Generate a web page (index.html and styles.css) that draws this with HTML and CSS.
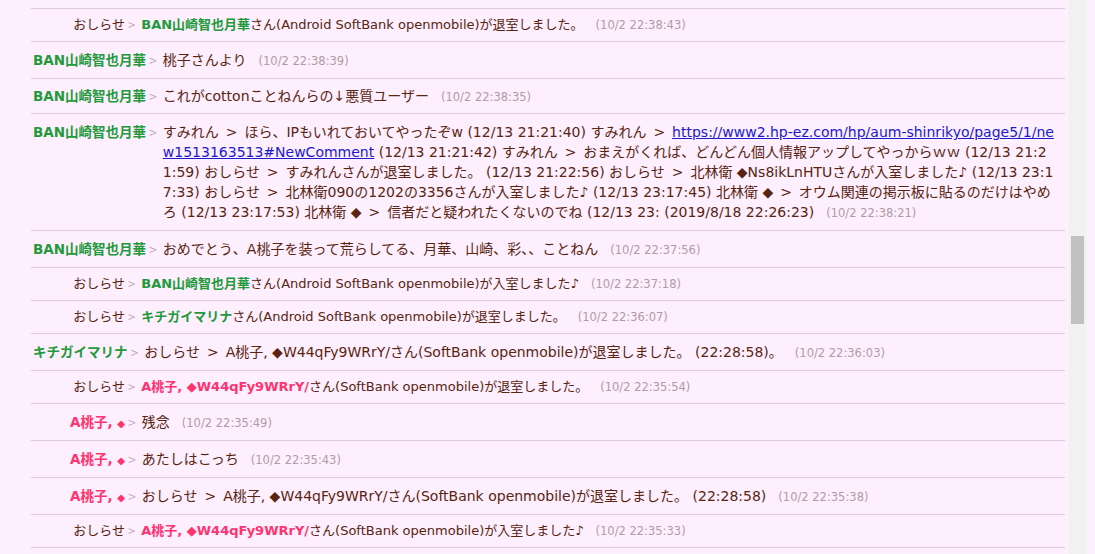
FILE: index.html
```html
<!DOCTYPE html>
<html lang="ja">

<head>
  <meta charset="UTF-8">
  <meta name="viewport" content="width=device-width, initial-scale=1.0">
  <title>ログ</title>
  <link rel="stylesheet" href="styles.css">
</head>

<body>
  <div class="page">
    <div class="log">
      <div class="rows">
        <div class="row sys">
          <span class="who">おしらせ</span><span class="sep">&gt;</span>
          <span class="msg"><b class="green">BAN山崎智也月華</b>さん(Android SoftBank openmobile)が退室しました。<span class="time">(10/2 22:38:43)</span></span>
        </div>
        <div class="row">
          <span class="who green">BAN山崎智也月華</span><span class="sep">&gt;</span>
          <span class="msg">桃子さんより<span class="time">(10/2 22:38:39)</span></span>
        </div>
        <div class="row short">
          <span class="who green">BAN山崎智也月華</span><span class="sep">&gt;</span>
          <span class="msg">これがcottonことねんらの↓悪質ユーザー<span class="time">(10/2 22:38:35)</span></span>
        </div>
        <div class="row">
          <span class="who green">BAN山崎智也月華</span><span class="sep">&gt;</span>
          <span class="msg">すみれん <i>&gt;</i> ほら、IPもいれておいてやったぞw (12/13 21:21:40) すみれん <i>&gt;</i> <a href="#">https://www2.hp-ez.com/hp/aum-shinrikyo/page5/1/new1513163513#NewComment</a> (12/13 21:21:42) すみれん <i>&gt;</i> おまえがくれば、どんどん個人情報アップしてやっからｗｗ (12/13 21:21:59) おしらせ <i>&gt;</i> すみれんさんが退室しました。 (12/13 21:22:56) おしらせ <i>&gt;</i> 北林衛 ◆Ns8ikLnHTUさんが入室しました♪ (12/13 23:17:33) おしらせ <i>&gt;</i> 北林衛090の1202の3356さんが入室しました♪ (12/13 23:17:45) 北林衛 ◆ <i>&gt;</i> オウム関連の掲示板に貼るのだけはやめろ (12/13 23:17:53) 北林衛 ◆ <i>&gt;</i> 信者だと疑われたくないのでね (12/13 23: (2019/8/18 22:26:23)<span class="time">(10/2 22:38:21)</span></span>
        </div>
        <div class="row">
          <span class="who green">BAN山崎智也月華</span><span class="sep">&gt;</span>
          <span class="msg">おめでとう、A桃子を装って荒らしてる、月華、山崎、彩、、ことねん<span class="time">(10/2 22:37:56)</span></span>
        </div>
        <div class="row sys">
          <span class="who">おしらせ</span><span class="sep">&gt;</span>
          <span class="msg"><b class="green">BAN山崎智也月華</b>さん(Android SoftBank openmobile)が入室しました♪<span class="time">(10/2 22:37:18)</span></span>
        </div>
        <div class="row sys">
          <span class="who">おしらせ</span><span class="sep">&gt;</span>
          <span class="msg"><b class="green">キチガイマリナ</b>さん(Android SoftBank openmobile)が退室しました。<span class="time">(10/2 22:36:07)</span></span>
        </div>
        <div class="row">
          <span class="who green">キチガイマリナ</span><span class="sep">&gt;</span>
          <span class="msg">おしらせ <i>&gt;</i> A桃子, ◆W44qFy9WRrY/さん(SoftBank openmobile)が退室しました。 (22:28:58)。<span class="time">(10/2 22:36:03)</span></span>
        </div>
        <div class="row sys">
          <span class="who">おしらせ</span><span class="sep">&gt;</span>
          <span class="msg"><b class="pink">A桃子, ◆W44qFy9WRrY/</b>さん(SoftBank openmobile)が退室しました。<span class="time">(10/2 22:35:54)</span></span>
        </div>
        <div class="row">
          <span class="who pink">A桃子, <small>◆</small></span><span class="sep">&gt;</span>
          <span class="msg">残念<span class="time">(10/2 22:35:49)</span></span>
        </div>
        <div class="row">
          <span class="who pink">A桃子, <small>◆</small></span><span class="sep">&gt;</span>
          <span class="msg">あたしはこっち<span class="time">(10/2 22:35:43)</span></span>
        </div>
        <div class="row">
          <span class="who pink">A桃子, <small>◆</small></span><span class="sep">&gt;</span>
          <span class="msg">おしらせ <i>&gt;</i> A桃子, ◆W44qFy9WRrY/さん(SoftBank openmobile)が退室しました。 (22:28:58)<span class="time">(10/2 22:35:38)</span></span>
        </div>
        <div class="row sys">
          <span class="who">おしらせ</span><span class="sep">&gt;</span>
          <span class="msg"><b class="pink">A桃子, ◆W44qFy9WRrY/</b>さん(SoftBank openmobile)が入室しました♪<span class="time">(10/2 22:35:33)</span></span>
        </div>
        <div class="row sys">
          <span class="who">おしらせ</span><span class="sep">&gt;</span>
          <span class="msg"><b class="green">キチガイマリナ</b>さん(Android SoftBank openmobile)が入室しました♪<span class="time">(10/2 22:35:20)</span></span>
        </div>
      </div>
    </div>
    <div class="track">
      <div class="thumb"></div>
    </div>
  </div>
</body>

</html>
```

FILE: styles.css
```css
html,
body {
  margin: 0;
  height: 100%;
  overflow: hidden;
  background: #fdeffd;
  font-family: "DejaVu Sans", "Noto Sans CJK JP", sans-serif;
  color: #5a2410;
}

.page {
  display: flex;
  height: 554px;
  padding-right: 9px;
}

.log {
  flex: 1;
  min-width: 0;
  overflow: hidden;
  padding: 8px 4px 0 31px;
}

.rows {
  border-top: 1px solid #dccbdc;
}

.row {
  display: flex;
  align-items: flex-start;
  padding: 8px 0;
  font-size: 14px;
  line-height: 20px;
  border-bottom: 1px solid #dccbdc;
}

.row.short {
  padding: 7px 0;
}

.row.sys {
  font-size: 13px;
  line-height: 18px;
  padding: 7px 0;
}

.who {
  flex-shrink: 0;
  min-width: 92px;
  padding-left: 2px;
  text-align: right;
  white-space: nowrap;
}

.row:not(.sys) .who {
  font-weight: bold;
  font-size: 13.5px;
}

.who small {
  font-size: 0.75em;
  line-height: 1;
}

.sep {
  flex-shrink: 0;
  font-family: "Noto Sans CJK JP", sans-serif;
  color: #c4aabb;
  margin: 0 6px 0 3px;
}

.msg {
  flex: 1;
  min-width: 0;
  padding-right: 8px;
  word-break: break-all;
}

.msg i {
  font-style: normal;
  margin: 0 2.5px;
}

.msg a {
  color: #1a1acc;
}

.green {
  color: #22993a;
}

.pink {
  color: #ff3370;
}

.time {
  margin-left: 12px;
  font-size: 11.5px;
  line-height: 1;
  color: #b39aa6;
}

.track {
  width: 17px;
  flex-shrink: 0;
  background: #f1f1f1;
}

.thumb {
  margin: 236px 2px 0;
  height: 88px;
  background: #c1c1c1;
}
```
